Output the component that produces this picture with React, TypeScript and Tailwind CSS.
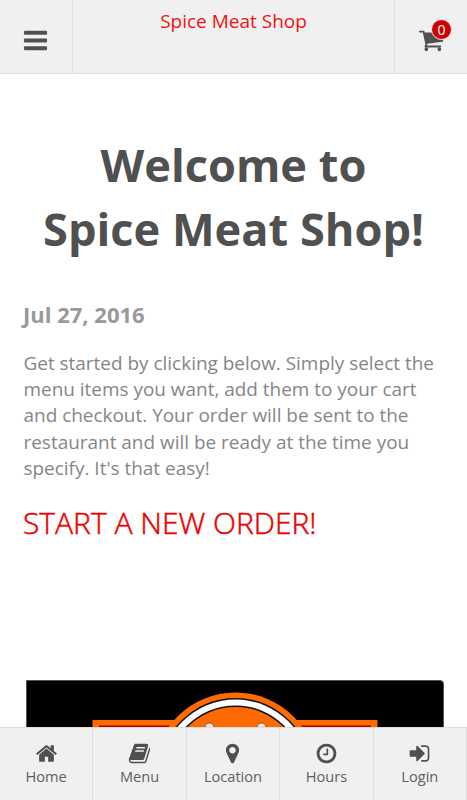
import React from "react";

const icons = {
  bars: "M1664 1344v128q0 26-19 45t-45 19H192q-26 0-45-19t-19-45v-128q0-26 19-45t45-19h1408q26 0 45 19t19 45zm0-512v128q0 26-19 45t-45 19H192q-26 0-45-19t-19-45V832q0-26 19-45t45-19h1408q26 0 45 19t19 45zm0-512v128q0 26-19 45t-45 19H192q-26 0-45-19t-19-45V320q0-26 19-45t45-19h1408q26 0 45 19t19 45z",
  cart: "M704 1536q0 52-38 90t-90 38-90-38-38-90 38-90 90-38 90 38 38 90zm896 0q0 52-38 90t-90 38-90-38-38-90 38-90 90-38 90 38 38 90zm128-1088v512q0 24-16.5 42.5T1671 1024L627 1146q13 60 13 70 0 16-24 64h920q26 0 45 19t19 45-19 45-45 19H512q-26 0-45-19t-19-45q0-11 8-31.5t16-36 21.5-40T509 1207L332 384H128q-26 0-45-19t-19-45 19-45 45-19h256q16 0 28.5 6.5T432 278t13 24.5 8 26 5.5 29.5 4.5 26h1201q26 0 45 19t19 45z",
  home: "M1472 992v480q0 26-19 45t-45 19h-384v-384H768v384H384q-26 0-45-19t-19-45V992q0-1 .5-3t.5-3l575-474 575 474q1 2 1 6zm223-69l-62 74q-8 9-21 11h-3q-13 0-21-7L896 424l-692 577q-12 8-24 7-13-2-21-11l-62-74q-8-10-7-23.5t11-21.5l719-599q32-26 76-26t76 26l244 204V288q0-14 9-23t23-9h192q14 0 23 9t9 23v408l219 182q10 8 11 21.5t-7 23.5z",
  book: "M1703 478q40 57 18 129l-275 906q-19 64-76.5 107.5T1247 1664H324q-77 0-148.5-53.5T76 1479q-24-67-2-127 0-4 3-27t4-37q1-8-3-21.5t-3-19.5q2-11 8-21t16.5-23.5T116 1179q23-38 45-91.5t30-91.5q3-10 .5-30t-.5-28q3-11 17-28t17-23q21-36 42-92t25-90q1-9-2.5-32t.5-28q4-13 22-30.5t22-22.5q19-26 42.5-84.5T404 411q1-8-3-25.5t-2-26.5q2-8 9-18t18-23 17-21q8-12 16.5-30.5t15-35 16-36 19.5-32 26.5-23.5 36-11.5T620 134l-1 3q38-9 51-9h761q74 0 114 56t18 130l-274 906q-36 119-71.5 153.5T1089 1408H220q-27 0-38 15-11 16-1 43 24 70 144 70h923q29 0 56-15.5t35-41.5l300-987q7-22 5-57 38 15 59 43zm-1064 2q-4 13 2 22.5t20 9.5h608q13 0 25.5-9.5T1311 480l21-64q4-13-2-22.5t-20-9.5H702q-13 0-25.5 9.5T660 416zm-83 256q-4 13 2 22.5t20 9.5h608q13 0 25.5-9.5T1228 736l21-64q4-13-2-22.5t-20-9.5H619q-13 0-25.5 9.5T577 672z",
  marker: "M1152 640q0-106-75-181t-181-75-181 75-75 181 75 181 181 75 181-75 75-181zm256 0q0 109-33 179l-364 774q-16 33-47.5 52t-67.5 19-67.5-19-46.5-52L417 819q-33-70-33-179 0-212 150-362t362-150 362 150 150 362z",
  clock: "M1024 544v448q0 14-9 23t-23 9H672q-14 0-23-9t-9-23v-64q0-14 9-23t23-9h224V544q0-14 9-23t23-9h64q14 0 23 9t9 23zm416 352q0-148-73-273t-198-198-273-73-273 73-198 198-73 273 73 273 198 198 273 73 273-73 198-198 73-273zm224 0q0 209-103 385.5T1281.5 1561 896 1664t-385.5-103T231 1281.5 128 896t103-385.5T510.5 231 896 128t385.5 103T1561 510.5 1664 896z",
  signIn: "M1312 896q0 26-19 45l-544 544q-19 19-45 19t-45-19-19-45v-288H192q-26 0-45-19t-19-45V704q0-26 19-45t45-19h448V352q0-26 19-45t45-19 45 19l544 544q19 19 19 45zm352-352v704q0 119-84.5 203.5T1376 1536h-320q-13 0-22.5-9.5t-9.5-22.5q0-4-1-20t-.5-26.5 3-23.5 10-19.5 20.5-6.5h320q66 0 113-47t47-113V544q0-66-47-113t-113-47h-312l-11.5-1-11.5-3-8-5.5-7-9-2-13.5q0-4-1-20t-.5-26.5 3-23.5 10-19.5 20.5-6.5h320q119 0 203.5 84.5T1664 544z",
};

type IconName = keyof typeof icons;

const Icon = ({ name, className }: { name: IconName; className?: string }) => (
  <svg viewBox="0 0 1792 1792" fill="currentColor" className={className} aria-hidden="true">
    <path d={icons[name]} />
  </svg>
);

const tabs: { label: string; icon: IconName }[] = [
  { label: "Home", icon: "home" },
  { label: "Menu", icon: "book" },
  { label: "Location", icon: "marker" },
  { label: "Hours", icon: "clock" },
  { label: "Login", icon: "signIn" },
];

const Header = () => (
  <header className="flex h-[74px] shrink-0 border-b border-[#dedede] bg-[#f0f0f0]">
    <button className="flex w-[73px] items-center justify-center border-r border-[#dedede] pt-[7px] pr-px" aria-label="Open menu">
      <Icon name="bars" className="size-[27px]" />
    </button>
    <div className="flex-1 pt-2 text-center text-[19px] leading-[27px] text-[#f41010]">
      Spice Meat Shop
    </div>
    <button className="flex w-[73px] items-start border-l border-[#dedede] pt-[27px] pl-[23px]" aria-label="Cart">
      <span className="relative block size-[26px]">
        <Icon name="cart" className="size-[26px]" />
        <span className="absolute -top-2 left-[13px] flex size-[21px] items-center justify-center rounded-full border border-[#f0f0f0] bg-[#d00000] text-[14px] leading-none text-white">
          0
        </span>
      </span>
    </button>
  </header>
);

// Top of the shop's logo, the rest sits below the tab bar
const ShopLogo = () => (
  <svg viewBox="0 0 417 200" className="block h-[200px] w-[417px]" aria-hidden="true">
    <path d="M65.5 39h285v161h-285z" fill="#ff6a00" />
    <path d="M72 44.5h272V200H72z" fill="#a80000" />
    <circle cx="208.5" cy="93.5" r="82" fill="#ff6a00" />
    <circle cx="208.5" cy="93.5" r="76.5" fill="#111" />
    <circle cx="208.5" cy="93.5" r="75" fill="#fff" />
    <circle cx="208.5" cy="93.5" r="69" fill="#111" />
    <circle cx="208.5" cy="93.5" r="67.5" fill="#ff6a00" />
    <circle cx="182.5" cy="46.5" r="4.5" fill="#eee3d2" stroke="#5a3a1c" strokeWidth=".7" />
    <circle cx="234.5" cy="46.5" r="4.5" fill="#eee3d2" stroke="#5a3a1c" strokeWidth=".7" />
  </svg>
);

const TabBar = () => (
  <nav className="grid h-[73px] shrink-0 grid-cols-5 border-t border-[#dedede] bg-[#f0f0f0]">
    {tabs.map((tab) => (
      <a key={tab.label} className="flex flex-col items-center border-r border-[#dedede] pt-[14px] text-[14.6px] leading-5">
        <Icon name={tab.icon} className="size-[23px]" />
        <span className="mt-px text-[#606060]">{tab.label}</span>
      </a>
    ))}
  </nav>
);

const App = () => {
  return (
    <div className="flex h-[800px] w-[467px] flex-col overflow-hidden bg-white font-['Open_Sans',sans-serif] text-[#505050]">
      <Header />
      <main className="min-h-0 flex-1 overflow-hidden px-[23px]">
        <h1 className="mt-[59px] text-center text-[45.2px] leading-[64px] font-bold">
          Welcome to
          <br />
          Spice Meat Shop!
        </h1>
        <h3 className="mt-[38px] text-[22px] leading-[30px] font-bold text-[#999]">Jul 27, 2016</h3>
        <p className="mt-[21px] ml-[0.5px] text-[18.95px] leading-[26.2px] whitespace-nowrap text-[#868686]">
          Get started by clicking below. Simply select the
          <br />
          menu items you want, add them to your cart
          <br />
          and checkout. Your order will be sent to the
          <br />
          restaurant and will be ready at the time you
          <br />
          specify. It's that easy!
        </p>
        <a className="mt-[21px] block text-[30px] leading-[42px] font-light text-[#ec0000] [-webkit-text-stroke:0.5px]">
          START A NEW ORDER!
        </a>
        <div className="mt-[136px] ml-[3px] w-[418px] overflow-hidden rounded-r border border-r border-[#555] bg-black">
          <ShopLogo />
        </div>
      </main>
      <TabBar />
    </div>
  );
};

export default App;
